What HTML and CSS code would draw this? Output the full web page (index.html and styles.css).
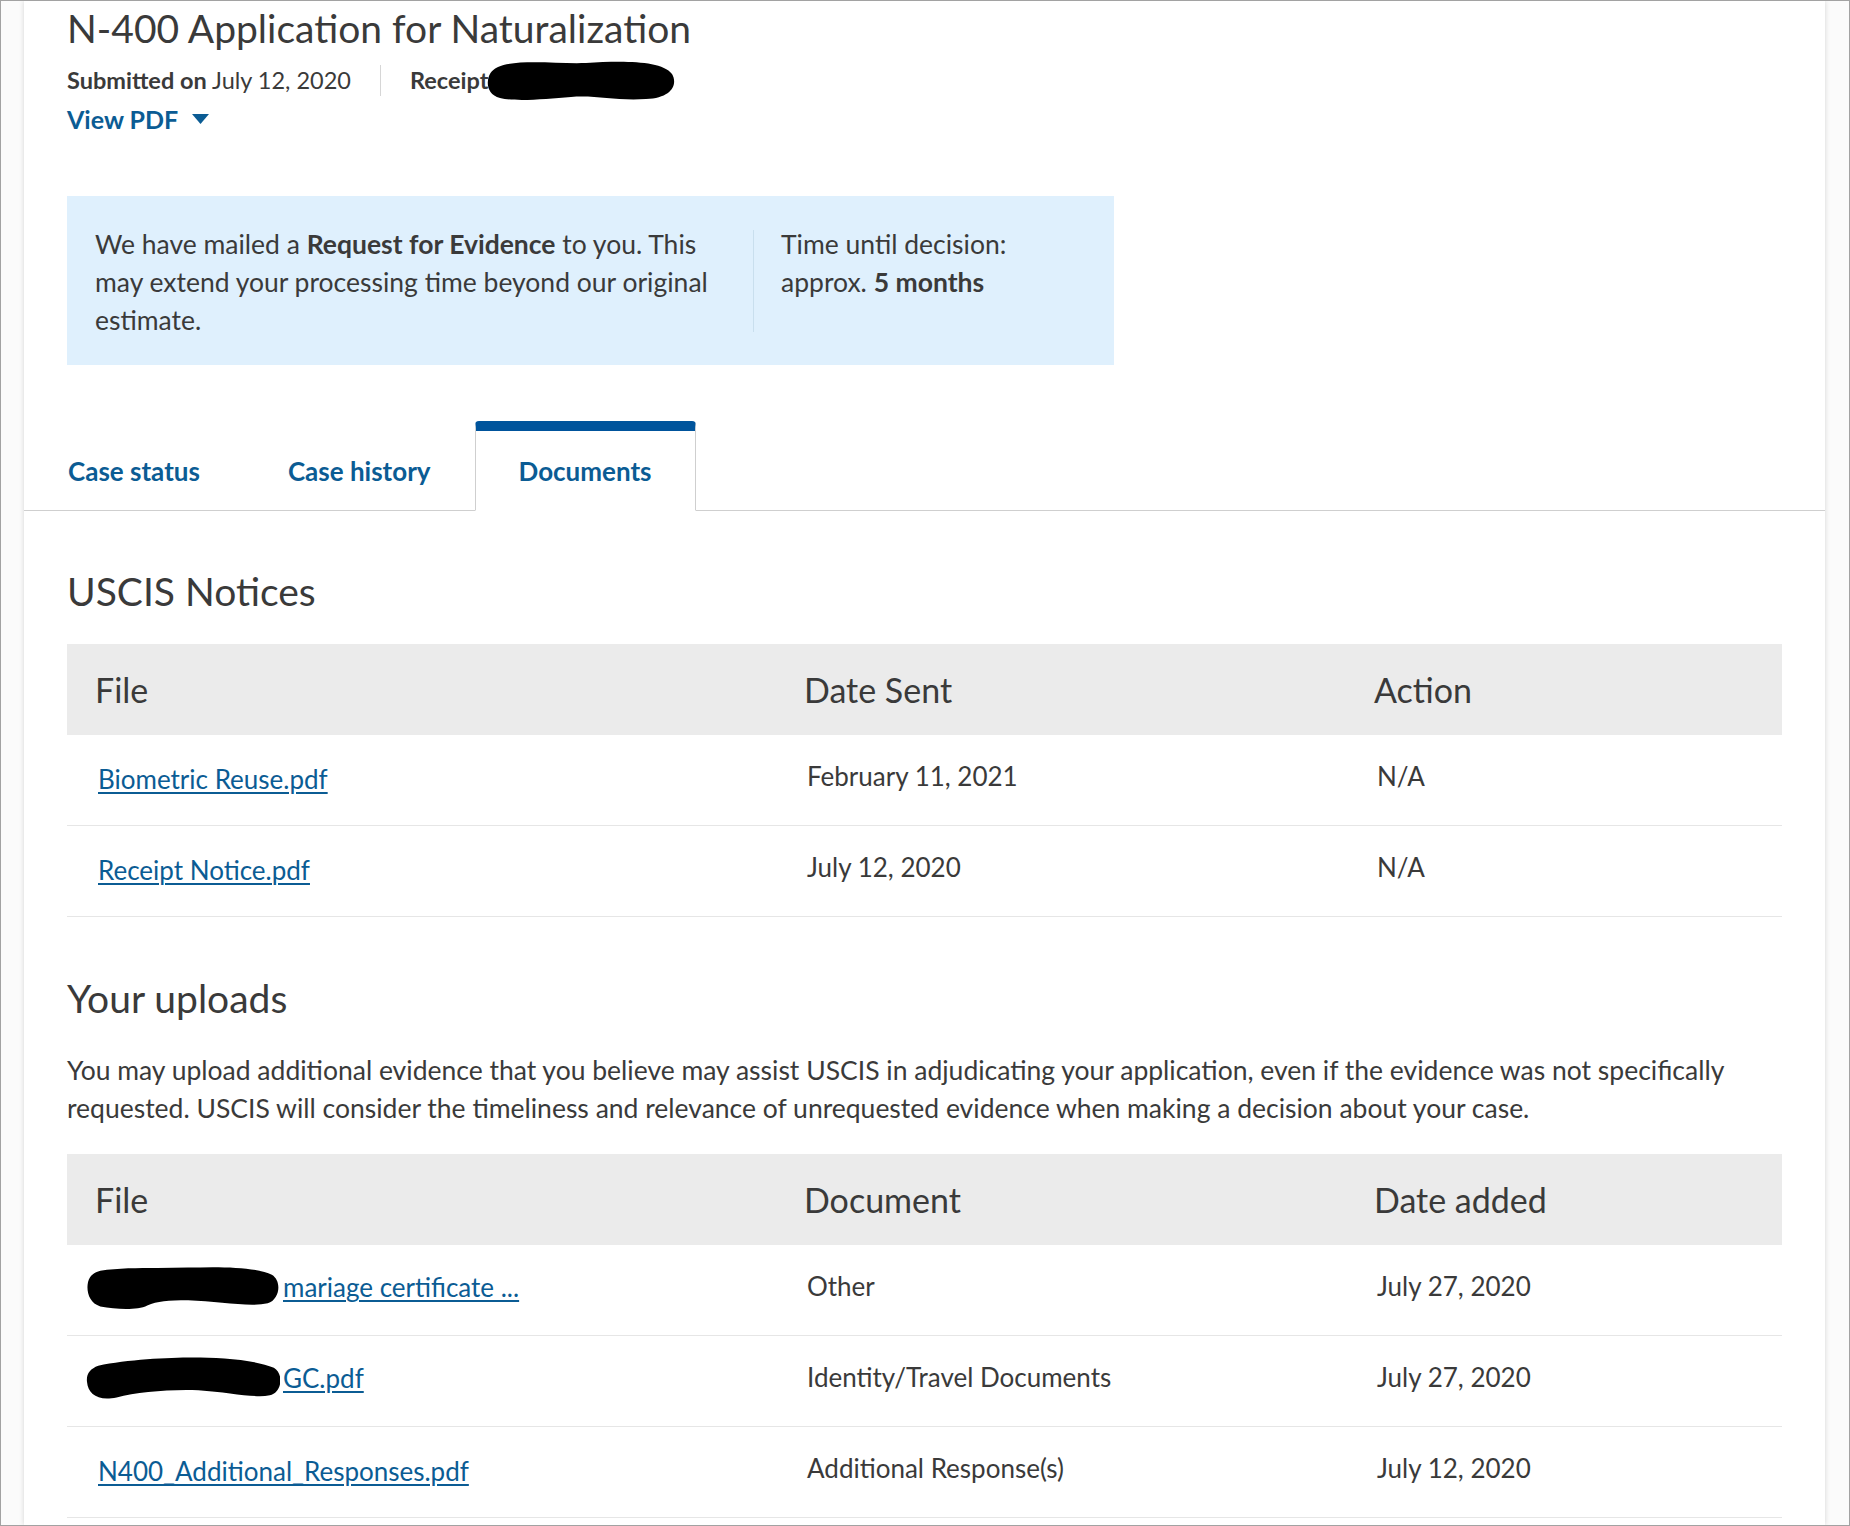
FILE: index.html
```html
<!DOCTYPE html>
<html lang="en">
<head>
<meta charset="utf-8">
<title>N-400 Application for Naturalization</title>
<link rel="stylesheet" href="styles.css">
</head>
<body>
<div class="frame">
  <main class="panel">
    <h1 class="title">N-400 Application for Naturalization</h1>
    <div class="meta">
      <span class="meta-item"><b>Submitted on</b> July 12, 2020</span>
      <span class="meta-item meta-receipt"><b>Receipt</b><svg class="redact redact-receipt" viewBox="0 0 190 44" aria-hidden="true"><path d="M12 9 C30 1 70 6 100 5 C135 3 175 2 186 16 C192 26 186 40 160 41 C130 43 110 37 85 39 C60 41 30 44 14 40 C2 37 0 26 3 18 C5 13 8 11 12 9 Z"/></svg></span>
    </div>
    <a class="view-pdf" href="#">View PDF<svg class="caret" viewBox="0 0 17 10" aria-hidden="true"><path d="M0 0 H17 L8.5 10 Z"/></svg></a>

    <div class="alert">
      <p class="alert-main">We have mailed a <b>Request for Evidence</b> to you. This may extend your processing time beyond our original estimate.</p>
      <div class="alert-divider"></div>
      <p class="alert-side">Time until decision:<br>approx. <b>5 months</b></p>
    </div>

    <nav class="tabs">
      <a class="tab" href="#">Case status</a>
      <a class="tab" href="#">Case history</a>
      <a class="tab tab-active" href="#">Documents</a>
    </nav>

    <section class="section">
      <h2 class="section-title">USCIS Notices</h2>
      <div class="table">
        <div class="row row-head">
          <div class="cell">File</div>
          <div class="cell">Date Sent</div>
          <div class="cell">Action</div>
        </div>
        <div class="row">
          <div class="cell"><a class="file-link" href="#">Biometric Reuse.pdf</a></div>
          <div class="cell">February 11, 2021</div>
          <div class="cell">N/A</div>
        </div>
        <div class="row">
          <div class="cell"><a class="file-link" href="#">Receipt Notice.pdf</a></div>
          <div class="cell">July 12, 2020</div>
          <div class="cell">N/A</div>
        </div>
      </div>
    </section>

    <section class="section section-uploads">
      <h2 class="section-title">Your uploads</h2>
      <p class="intro">You may upload additional evidence that you believe may assist USCIS in adjudicating your application, even if the evidence was not specifically requested. USCIS will consider the timeliness and relevance of unrequested evidence when making a decision about your case.</p>
      <div class="table">
        <div class="row row-head">
          <div class="cell">File</div>
          <div class="cell">Document</div>
          <div class="cell">Date added</div>
        </div>
        <div class="row">
          <div class="cell"><a class="file-link file-link-redacted" href="#"><svg class="redact redact-file" viewBox="0 0 190 44" aria-hidden="true"><path d="M14 6 C40 2 70 4 100 3 C130 2 165 2 182 10 C192 16 190 34 178 38 C160 42 130 36 100 35 C80 35 70 36 60 40 C50 45 30 44 14 41 C3 38 0 26 2 17 C4 10 8 8 14 6 Z"/></svg>mariage certificate ...</a></div>
          <div class="cell">Other</div>
          <div class="cell">July 27, 2020</div>
        </div>
        <div class="row">
          <div class="cell"><a class="file-link file-link-redacted" href="#"><svg class="redact redact-file" viewBox="0 0 190 44" aria-hidden="true"><path d="M12 10 C40 4 80 2 105 2 C130 2 165 4 184 12 C194 18 192 36 180 39 C165 42 140 36 110 34 C80 33 50 36 30 41 C12 45 2 38 1 26 C0 18 4 13 12 10 Z"/></svg>GC.pdf</a></div>
          <div class="cell">Identity/Travel Documents</div>
          <div class="cell">July 27, 2020</div>
        </div>
        <div class="row">
          <div class="cell"><a class="file-link" href="#">N400_Additional_Responses.pdf</a></div>
          <div class="cell">Additional Response(s)</div>
          <div class="cell">July 12, 2020</div>
        </div>
      </div>
    </section>
  </main>
</div>
</body>
</html>
```

FILE: styles.css
```css
* {
  box-sizing: border-box;
}

html, body {
  margin: 0;
  padding: 0;
  background: #ffffff;
}

body {
  font-family: "Source Sans Pro", Lato, "Noto Sans", sans-serif;
  color: #3a3a3a;
}

.frame {
  width: 1850px;
  height: 1526px;
  border: 1px solid #a2a2a2;
  background: #fbfbfb;
  overflow: hidden;
  padding-left: 23px;
}

.panel {
  width: 1801px;
  min-height: 100%;
  background: #ffffff;
  box-shadow: 0 0 5px rgba(0, 0, 0, 0.16);
  padding: 3px 43px 0 43px;
}

.title {
  margin: 0;
  font-size: 39px;
  line-height: 48px;
  font-weight: 400;
  color: #3a3a3a;
}

.meta {
  display: flex;
  align-items: center;
  margin-top: 12px;
  height: 32px;
  font-size: 23.5px;
}

.meta b {
  font-weight: 700;
}

.meta-item {
  display: flex;
  align-items: center;
  height: 31px;
  white-space: pre;
}

.meta-receipt {
  border-left: 1px solid #d6d6d6;
  margin-left: 29px;
  padding-left: 29px;
}

.redact {
  fill: #000000;
  display: inline-block;
}

.redact-receipt {
  width: 190px;
  height: 44px;
  margin: -6px 0 -6px -2px;
}

.view-pdf {
  display: flex;
  align-items: center;
  margin-top: 7px;
  height: 32px;
  font-size: 25px;
  font-weight: 700;
  color: #0b5c94;
  text-decoration: none;
}

.caret {
  width: 17px;
  height: 10px;
  margin-left: 14px;
  fill: #0b5c94;
}

.alert {
  display: flex;
  width: 1047px;
  margin-top: 61px;
  background: #dff0fd;
  padding: 29px 28px 26px 28px;
  font-size: 26.5px;
  line-height: 38px;
  color: #3a3a3a;
}

.alert p {
  margin: 0;
}

.alert b {
  font-weight: 700;
}

.alert-main {
  width: 640px;
  flex: none;
}

.alert-divider {
  flex: none;
  width: 1px;
  background: #c9dfee;
  margin: 5px 27px 7px 18px;
}

.alert-side {
  flex: 1;
}

.tabs {
  display: flex;
  margin: 56px -43px 0 -43px;
  border-bottom: 1px solid #cfcfcf;
}

.tab {
  display: flex;
  align-items: center;
  height: 90px;
  padding: 10px 43px 0 43px;
  margin-bottom: -1px;
  font-size: 26px;
  font-weight: 700;
  color: #0b5c94;
  text-decoration: none;
  border: 1px solid transparent;
  border-top: 0;
}

.tab-active {
  padding-top: 0;
  border-top: 10px solid #00549c;
  border-left-color: #cfcfcf;
  border-right-color: #cfcfcf;
  border-bottom: 1px solid #ffffff;
  border-radius: 4px 4px 0 0;
  background: #ffffff;
}

.section {
  margin-top: 56px;
}

.section-uploads {
  margin-top: 57px;
}

.section-title {
  margin: 0;
  font-size: 39px;
  line-height: 48px;
  font-weight: 400;
  color: #3a3a3a;
}

.intro {
  margin: 29px 0 0 0;
  font-size: 26.5px;
  line-height: 38px;
}

.table {
  margin-top: 29px;
}

.intro + .table {
  margin-top: 27px;
}

.row {
  display: grid;
  grid-template-columns: 709px 570px 1fr;
  align-items: center;
  height: 91px;
  border-bottom: 1px solid #e6e6e6;
  font-size: 26px;
  color: #3a3a3a;
}

.row .cell {
  padding-left: 31px;
  padding-bottom: 8px;
}

.row-head {
  background: #ebebeb;
  border-bottom: 0;
  font-size: 34px;
}

.row-head .cell {
  padding-left: 28px;
  padding-bottom: 0;
}

.file-link {
  display: inline-flex;
  align-items: center;
  position: relative;
  top: 3px;
  color: #0b5c94;
  text-decoration: underline;
  text-decoration-thickness: 2px;
  text-underline-offset: 3px;
}

.file-link-redacted {
  top: 8px;
}

.redact-file {
  width: 194px;
  height: 48px;
  margin: -12px 3px -12px -12px;
}
```
